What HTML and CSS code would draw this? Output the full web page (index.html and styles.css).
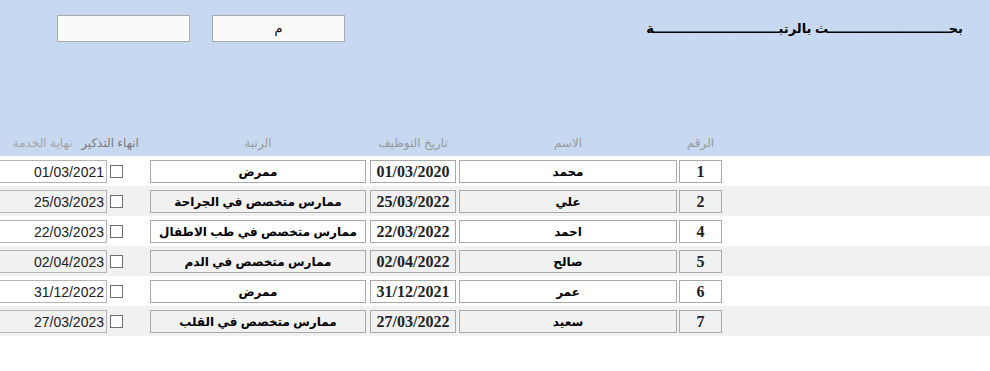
FILE: index.html
```html
<!DOCTYPE html>
<html lang="ar" dir="rtl">
<head>
    <meta charset="UTF-8">
    <meta name="viewport" content="width=device-width, initial-scale=1.0">
    <title>بحث بالرتبة</title>
    <link rel="stylesheet" href="styles.css">
</head>
<body>
<div class="top">
    <div class="search">
        <h3 class="title">بحـــــــــــــــــــــــــــث بالرتبــــــــــــــــــــــــــــة</h3>
        <div class="search-inputs">
            <input type="text" class="search-box" value="م">
            <input type="text" class="search-box" value="">
        </div>
    </div>
    <div class="labels">
        <div class="col-num">الرقم</div>
        <div class="col-name">الاسم</div>
        <div class="col-date">تاريخ التوظيف</div>
        <div class="col-rank">الرتبة</div>
        <div class="col-remind">انهاء التذكير</div>
        <div class="col-end">نهاية الخدمة</div>
    </div>
</div>

<div class="rows">
    <div class="row">
        <input class="cell col-num serif" value="1" readonly>
        <input class="cell col-name" value="محمد" readonly>
        <input class="cell col-date serif" value="01/03/2020" readonly>
        <input class="cell col-rank" value="ممرض" readonly>
        <div class="col-check"><input type="checkbox"></div>
        <input class="cell col-end plain" value="01/03/2021" readonly>
    </div>
    <div class="row">
        <input class="cell col-num serif" value="2" readonly>
        <input class="cell col-name" value="علي" readonly>
        <input class="cell col-date serif" value="25/03/2022" readonly>
        <input class="cell col-rank" value="ممارس متخصص في الجراحة" readonly>
        <div class="col-check"><input type="checkbox"></div>
        <input class="cell col-end plain" value="25/03/2023" readonly>
    </div>
    <div class="row">
        <input class="cell col-num serif" value="4" readonly>
        <input class="cell col-name" value="احمد" readonly>
        <input class="cell col-date serif" value="22/03/2022" readonly>
        <input class="cell col-rank" value="ممارس متخصص في طب الاطفال" readonly>
        <div class="col-check"><input type="checkbox"></div>
        <input class="cell col-end plain" value="22/03/2023" readonly>
    </div>
    <div class="row">
        <input class="cell col-num serif" value="5" readonly>
        <input class="cell col-name" value="صالح" readonly>
        <input class="cell col-date serif" value="02/04/2022" readonly>
        <input class="cell col-rank" value="ممارس متخصص في الدم" readonly>
        <div class="col-check"><input type="checkbox"></div>
        <input class="cell col-end plain" value="02/04/2023" readonly>
    </div>
    <div class="row">
        <input class="cell col-num serif" value="6" readonly>
        <input class="cell col-name" value="عمر" readonly>
        <input class="cell col-date serif" value="31/12/2021" readonly>
        <input class="cell col-rank" value="ممرض" readonly>
        <div class="col-check"><input type="checkbox"></div>
        <input class="cell col-end plain" value="31/12/2022" readonly>
    </div>
    <div class="row">
        <input class="cell col-num serif" value="7" readonly>
        <input class="cell col-name" value="سعيد" readonly>
        <input class="cell col-date serif" value="27/03/2022" readonly>
        <input class="cell col-rank" value="ممارس متخصص في القلب" readonly>
        <div class="col-check"><input type="checkbox"></div>
        <input class="cell col-end plain" value="27/03/2023" readonly>
    </div>
</div>
</body>
</html>
```

FILE: styles.css
```css
body {
    margin: 0;
    direction: rtl;
    font-family: "Liberation Sans", "DejaVu Sans", sans-serif;
    background-color: #ffffff;
    overflow: hidden;
}

.top {
    height: 156px;
    background-color: #c6d9f1;
    display: flex;
    flex-direction: column;
    justify-content: space-between;
}

.search {
    display: flex;
    align-items: flex-start;
    padding: 15px 27px 0 57px;
}

.title {
    margin: 6px 0 0 0;
    font-size: 13px;
    font-weight: bold;
    color: #000;
    white-space: nowrap;
}

.search-inputs {
    margin-right: auto;
    display: flex;
    gap: 22px;
}

.search-box {
    width: 133px;
    height: 27px;
    box-sizing: border-box;
    border: 1px solid #aaaaaa;
    background-color: #fafafa;
    text-align: center;
    font-family: "Liberation Sans", "DejaVu Sans", sans-serif;
    font-size: 13px;
    padding: 0;
    margin: 0;
    color: #000;
}

.labels {
    display: flex;
    padding: 0 268px 3px 0;
    color: #999999;
    font-size: 12px;
    height: 20px;
    align-items: center;
    white-space: nowrap;
}

.labels div {
    text-align: center;
    flex-shrink: 0;
}

.col-num { width: 43px; margin-left: 2px; }
.col-name { width: 218px; margin-left: 3px; }
.col-date { width: 86px; margin-left: 4px; }
.col-rank { width: 216px; }
.labels .col-remind { margin-right: 10px; width: 60px; color: #7a7a7a; }
.labels .col-end { margin-right: 5px; width: 65px; color: #a5a5a5; }

.row {
    display: flex;
    height: 30px;
    box-sizing: border-box;
    padding: 4px 268px 0 0;
    align-items: flex-start;
}

.row:nth-child(even) {
    background-color: #f1f1f1;
}

.cell {
    height: 23px;
    box-sizing: border-box;
    border: 1px solid #a9a9a9;
    background-color: transparent;
    margin-top: 0;
    margin-bottom: 0;
    margin-right: 0;
    padding: 0;
    text-align: center;
    font-family: "Liberation Sans", "DejaVu Sans", sans-serif;
    font-size: 12px;
    font-weight: bold;
    color: #000;
    flex-shrink: 0;
    outline: none;
}

.cell.serif {
    font-family: "Liberation Serif", serif;
    font-size: 16px;
    color: #222;
}

.cell.col-rank {
    margin-left: 0;
}

.cell.plain {
    width: 130px;
    font-weight: normal;
    font-size: 14px;
    text-align: right;
    padding-right: 2px;
    color: #222;
    border-color: #b5b5b5;
}

.col-check {
    width: 43px;
    flex-shrink: 0;
    display: flex;
    padding: 5px 27px 0 0;
    box-sizing: border-box;
}

.col-check input {
    appearance: none;
    width: 13px;
    height: 13px;
    margin: 0;
    border: 1px solid #6f6f6f;
    background-color: #fff;
}
```
